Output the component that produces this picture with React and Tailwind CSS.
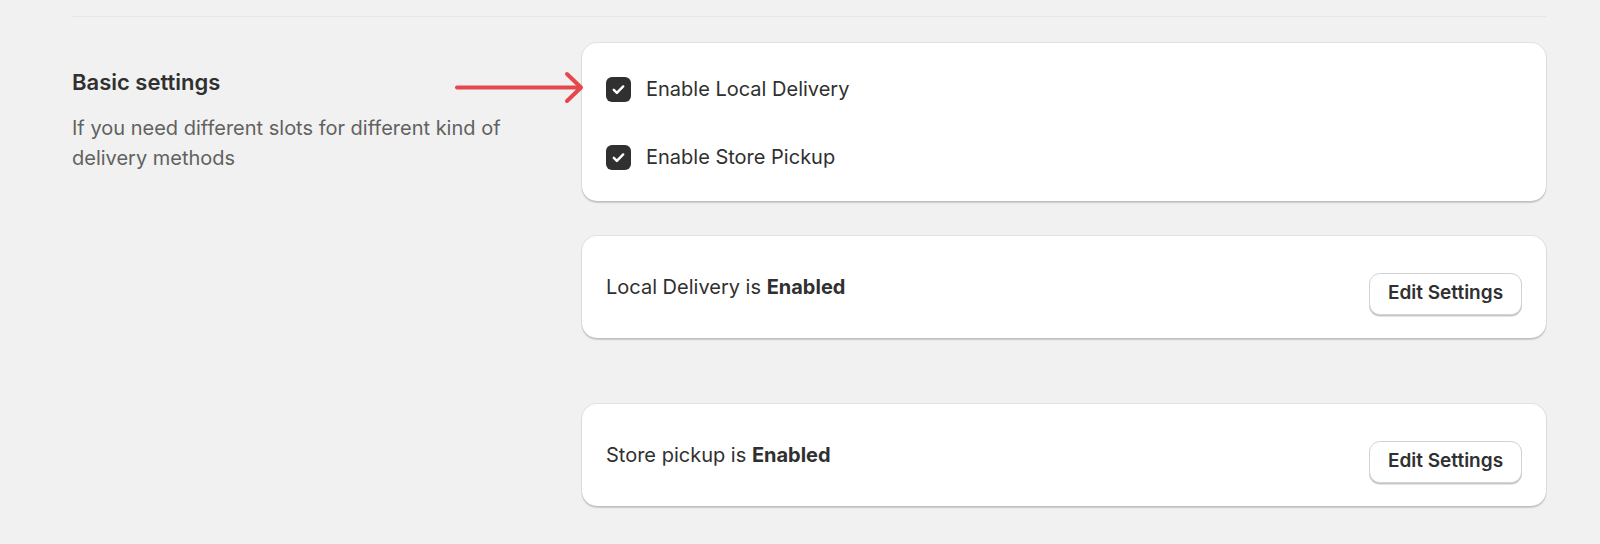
import React from "react";

function Check() {
  return (
    <span className="flex h-[25px] w-[25px] shrink-0 items-center justify-center rounded-[6px] bg-[#303030]">
      <svg width="25" height="25" viewBox="0 0 25 25" fill="none">
        <path d="M7.8 12.8l3.1 3.1 6.3-6.5" stroke="#fff" strokeWidth="2.4" strokeLinecap="round" strokeLinejoin="round" />
      </svg>
    </span>
  );
}

function EditButton({ className = "" }) {
  return (
    <button className={"h-[42px] w-[153px] rounded-[11px] border border-[#d3d3d3] bg-white text-[19px] font-semibold text-[#303030] shadow-[0_1.5px_0_0_rgba(0,0,0,0.22)] " + className}>
      Edit Settings
    </button>
  );
}

export default function App() {
  return (
    <div className="relative min-h-[544px] bg-[#f1f1f1] pl-[72px] pr-[54px] pt-[16px] font-['Inter','Liberation_Sans',sans-serif] text-[#303030]">
      <div className="h-px bg-[#e6e6e6]" />
      <div className="mt-[26px] flex">
        <div className="w-[510px] shrink-0 pt-[25px]">
          <h2 className="text-[22px] font-semibold leading-[28px] text-[#303030]">Basic settings</h2>
          <p className="mt-[18px] max-w-[450px] text-[20px] leading-[29.5px] text-[#616161]">
            If you need different slots for different kind of delivery methods
          </p>
        </div>
        <div className="flex flex-1 flex-col">
          <div className="rounded-[15px] bg-white px-[24px] pb-[30px] pt-[32px] shadow-[0_0_0_1px_rgba(0,0,0,0.06),0_1.5px_1.5px_rgba(0,0,0,0.16)]">
            <label className="flex h-[28px] items-center gap-[15px] text-[20px]">
              <Check />
              <span>Enable Local Delivery</span>
            </label>
            <label className="mt-[40px] flex h-[28px] items-center gap-[15px] text-[20px]">
              <Check />
              <span>Enable Store Pickup</span>
            </label>
          </div>
          <div className="mt-[35px] flex h-[102px] items-center justify-between rounded-[15px] bg-white px-[24px] shadow-[0_0_0_1px_rgba(0,0,0,0.06),0_1.5px_1.5px_rgba(0,0,0,0.16)]">
            <span className="text-[20px]">
              Local Delivery is <span className="font-bold">Enabled</span>
            </span>
            <EditButton className="mt-[13px]" />
          </div>
          <div className="mt-[66px] flex h-[102px] items-center justify-between rounded-[15px] bg-white px-[24px] shadow-[0_0_0_1px_rgba(0,0,0,0.06),0_1.5px_1.5px_rgba(0,0,0,0.16)]">
            <span className="text-[20px]">
              Store pickup is <span className="font-bold">Enabled</span>
            </span>
            <EditButton className="mt-[13px]" />
          </div>
        </div>
      </div>
      <svg className="absolute left-[450px] top-[68px]" width="140" height="40" viewBox="0 0 140 40" fill="none">
        <path d="M7 19.5H130" stroke="#e5474b" strokeWidth="4" strokeLinecap="round" />
        <path d="M117 6l14 13.5-14 13.5" stroke="#e5474b" strokeWidth="4" strokeLinecap="round" strokeLinejoin="round" />
      </svg>
    </div>
  );
}
